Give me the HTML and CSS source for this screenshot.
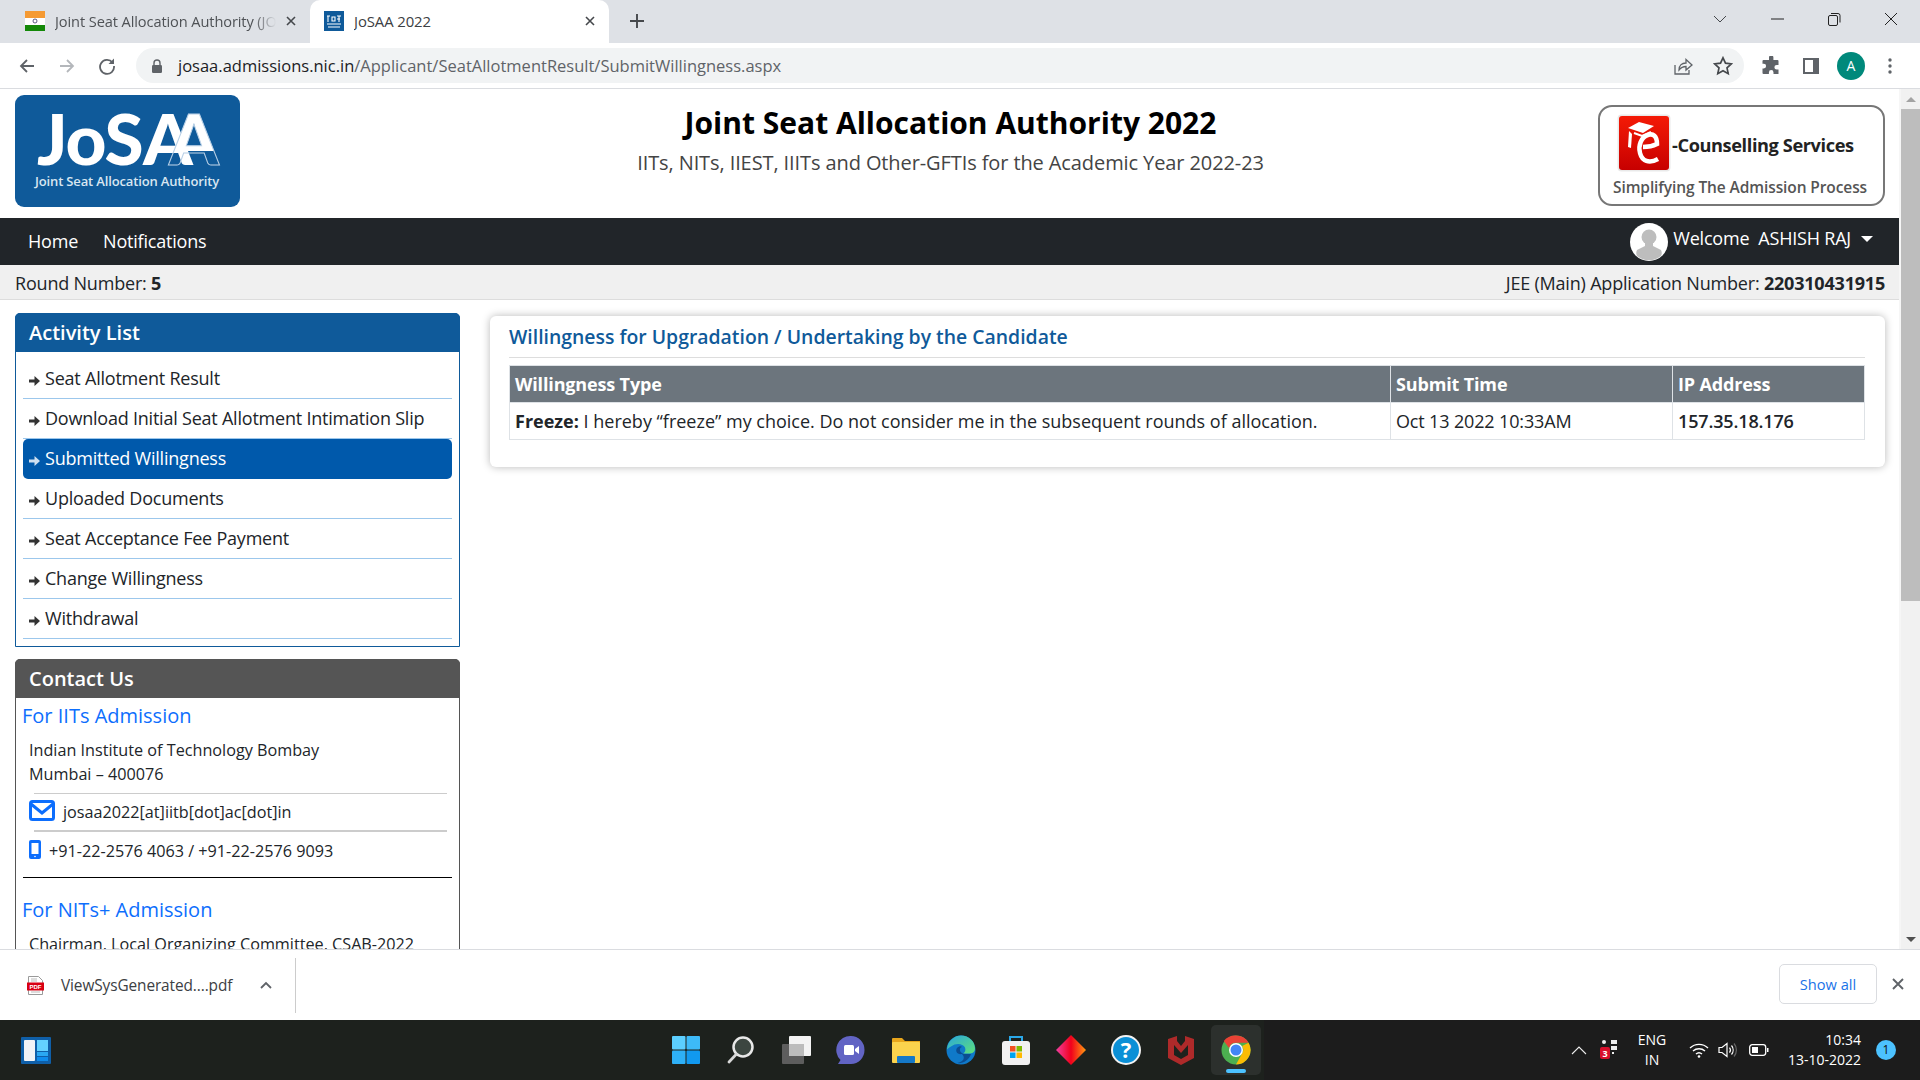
FILE: index.html
```html
<!DOCTYPE html>
<html lang="en">
<head>
  <meta charset="UTF-8">
  <title>JoSAA 2022</title>
  <link rel="stylesheet" href="styles.css">
</head>
<body>

<div class="browser">
  <!-- Tabs -->
  <div class="tabstrip">
    <div class="tab">
      <svg class="favicon" viewBox="0 0 20 20"><rect width="20" height="7" fill="#f59a33"/><rect y="7" width="20" height="7" fill="#fff"/><rect y="14" width="20" height="6" fill="#138808"/><circle cx="10" cy="10" r="2" fill="none" stroke="#336" stroke-width=".8"/></svg>
      <span class="tab-title tab-title-fade">Joint Seat Allocation Authority (JOSAA)</span>
      <svg class="tab-close" viewBox="0 0 10 10"><path d="M1 1l8 8M9 1l-8 8" stroke="#45484c" stroke-width="1.6"/></svg>
    </div>
    <div class="tab tab-active">
      <svg class="favicon" viewBox="0 0 20 20"><rect width="20" height="20" fill="#0f5a9a"/><path d="M3 5h3M4 5v6M8 6h3v4H8zM13 5h4M13 8h3M15 5v6M3 13h14M4 16h12" stroke="#fff" stroke-width="1.1" fill="none"/></svg>
      <span class="tab-title">JoSAA 2022</span>
      <svg class="tab-close" viewBox="0 0 10 10"><path d="M1 1l8 8M9 1l-8 8" stroke="#45484c" stroke-width="1.6"/></svg>
    </div>
    <svg class="new-tab" viewBox="0 0 14 14"><path d="M7 0v14M0 7h14" stroke="#45484c" stroke-width="1.9"/></svg>
    <div class="window-controls">
      <svg viewBox="0 0 16 16"><path d="M2 5l6 6 6-6" fill="none" stroke="#45484c" stroke-width="1"/></svg>
      <svg viewBox="0 0 16 16"><path d="M2 8h13" stroke="#222" stroke-width="1"/></svg>
      <svg viewBox="0 0 16 16"><rect x="2.5" y="4.5" width="9" height="10" rx="1.5" fill="none" stroke="#222"/><path d="M5 2.5h7a2 2 0 0 1 2 2v7" fill="none" stroke="#222"/></svg>
      <svg viewBox="0 0 16 16"><path d="M2 2l12 12M14 2L2 14" stroke="#222" stroke-width="1"/></svg>
    </div>
  </div>

  <!-- Address bar -->
  <div class="toolbar">
    <svg class="tool-icon" viewBox="0 0 18 18"><path d="M16 9H3M9 3L3 9l6 6" fill="none" stroke="#5f6368" stroke-width="1.8"/></svg>
    <svg class="tool-icon" viewBox="0 0 18 18"><path d="M2 9h13M9 3l6 6-6 6" fill="none" stroke="#b4b7bb" stroke-width="1.8"/></svg>
    <svg class="tool-icon" viewBox="0 0 18 18"><path d="M14.5 5.5A7 7 0 1 0 16 9" fill="none" stroke="#5f6368" stroke-width="1.8"/><path d="M16 1.5v5.5h-5.5z" fill="#5f6368"/></svg>
    <div class="omnibox">
      <svg class="lock" viewBox="0 0 12 14"><path d="M3 6V4a3 3 0 0 1 6 0v2" fill="none" stroke="#5f6368" stroke-width="1.4"/><rect x="1" y="6" width="10" height="8" rx="1.2" fill="#5f6368"/></svg>
      <span class="url"><span class="url-host">josaa.admissions.nic.in</span>/Applicant/SeatAllotmentResult/SubmitWillingness.aspx</span>
      <svg class="omni-icon omni-share" viewBox="0 0 20 20"><path d="M2 9v9h14v-4" fill="none" stroke="#5f6368" stroke-width="1.3"/><path d="M6 14c0-5 3-7 7-7V3.5l6 5.5-6 5v-3.500c-3 0-5 1-7 3.500z" fill="none" stroke="#5f6368" stroke-width="1.3"/></svg>
      <svg class="omni-icon" viewBox="0 0 20 20"><path d="M10 1.800l2.500 5.400 5.900.7-4.400 4 1.200 5.800L10 14.800l-5.200 2.900L6 11.900l-4.400-4 5.900-.7z" fill="none" stroke="#45484c" stroke-width="1.700"/></svg>
    </div>
    <svg class="ext-icon" viewBox="0 0 20 20"><path d="M8 1.500a2.200 2.200 0 0 1 4.400 0V4h4.100a1 1 0 0 1 1 1v4h-1.800a2.300 2.300 0 0 0 0 4.600h1.800v4.400h-5v-1.600a2.300 2.300 0 0 0-4.600 0V18H2.500a1 1 0 0 1-1-1v-4.600h1.300a2.300 2.300 0 0 0 0-4.600H1.500V5a1 1 0 0 1 1-1H8z" fill="#5f6368"/></svg>
    <svg class="ext-icon" viewBox="0 0 20 20"><path fill-rule="evenodd" d="M2 2h16v16H2zM4 4v12h8V4z" fill="#5f6368"/></svg>
    <span class="profile">A</span>
    <svg class="kebab" viewBox="0 0 4 18"><circle cx="2" cy="3" r="1.700" fill="#5f6368"/><circle cx="2" cy="9" r="1.700" fill="#5f6368"/><circle cx="2" cy="15" r="1.700" fill="#5f6368"/></svg>
  </div>

  <!-- Page -->
  <div class="viewport">
    <div class="page">
      <div class="site-header">
        <div class="josaa-logo">
          <svg viewBox="0 0 225 112" class="josaa-mark">
            <defs><linearGradient id="halfA" x1="0" y1="0" x2="0" y2="1"><stop offset=".66" stop-color="#fff"/><stop offset=".66" stop-color="#fff" stop-opacity="0"/></linearGradient></defs>
            <text x="22" y="70" class="mark-big">JoS</text>
            <text x="128" y="70" class="mark-big">A</text>
            <text x="154" y="70" class="mark-big mark-outline">A</text>
            <text x="112" y="91" class="mark-small" text-anchor="middle">Joint Seat Allocation Authority</text>
          </svg>
        </div>
        <div class="site-title">
          <h1>Joint Seat Allocation Authority 2022</h1>
          <p>IITs, NITs, IIEST, IIITs and Other-GFTIs for the Academic Year 2022-23</p>
        </div>
        <div class="counselling-logo">
          <div class="counselling-top">
            <svg class="e-mark" viewBox="0 0 54 58">
              <defs><linearGradient id="redg" x1="0" y1="0" x2="0" y2="1"><stop offset="0" stop-color="#f41a06"/><stop offset="1" stop-color="#c70000"/></linearGradient></defs>
              <rect x=".5" y=".5" width="53" height="57" rx="4" fill="#e9e9e9"/>
              <rect x="2" y="2" width="50" height="54" rx="3" fill="url(#redg)"/>
              <path d="M11 14l11-6 15 4-11 7z" fill="#fff"/>
              <path d="M12 17l-1 16 3 1 1-14z" fill="#fff"/>
              <path d="M17 19l8 3 9-4" fill="none" stroke="#fff" stroke-width="2"/>
              <path d="M26 33c6 0 10-1 14-3 0-8-4-11-9-9-7 2-10 11-8 18 2 8 9 11 18 6" fill="none" stroke="#fff" stroke-width="4.500"/>
            </svg>
            <span class="counselling-name">-Counselling Services</span>
          </div>
          <div class="counselling-tag">Simplifying The Admission Process</div>
        </div>
      </div>

      <nav class="navbar">
        <a class="nav-link">Home</a>
        <a class="nav-link">Notifications</a>
        <div class="nav-user">
          <svg class="user-pic" viewBox="0 0 38 38"><circle cx="19" cy="19" r="19" fill="#fff"/><circle cx="19" cy="14" r="7.500" fill="#bdbdbd"/><path d="M15 20h8v3l8 4c1 2 1 4 0 6a19 19 0 0 1-24 0c-1-2-1-4 0-6l8-4z" fill="#bdbdbd"/></svg>
          <span class="user-text">Welcome&nbsp; ASHISH RAJ</span>
          <span class="caret"></span>
        </div>
      </nav>

      <div class="round-bar">
        <span>Round Number: <strong>5</strong></span>
        <span>JEE (Main) Application Number: <strong>220310431915</strong></span>
      </div>

      <div class="content">
        <aside class="sidebar">
          <div class="side-panel activity">
            <div class="side-head">Activity List</div>
            <ul class="activity-list">
              <li><svg class="li-arrow" viewBox="0 0 11 10"><path d="M0 3.500h5.500V0L11 5l-5.500 5V6.500H0z"/></svg>Seat Allotment Result</li>
              <li><svg class="li-arrow" viewBox="0 0 11 10"><path d="M0 3.500h5.500V0L11 5l-5.500 5V6.500H0z"/></svg>Download Initial Seat Allotment Intimation Slip</li>
              <li class="active"><svg class="li-arrow" viewBox="0 0 11 10"><path d="M0 3.500h5.500V0L11 5l-5.500 5V6.500H0z"/></svg>Submitted Willingness</li>
              <li><svg class="li-arrow" viewBox="0 0 11 10"><path d="M0 3.500h5.500V0L11 5l-5.500 5V6.500H0z"/></svg>Uploaded Documents</li>
              <li><svg class="li-arrow" viewBox="0 0 11 10"><path d="M0 3.500h5.500V0L11 5l-5.500 5V6.500H0z"/></svg>Seat Acceptance Fee Payment</li>
              <li><svg class="li-arrow" viewBox="0 0 11 10"><path d="M0 3.500h5.500V0L11 5l-5.500 5V6.500H0z"/></svg>Change Willingness</li>
              <li><svg class="li-arrow" viewBox="0 0 11 10"><path d="M0 3.500h5.500V0L11 5l-5.500 5V6.500H0z"/></svg>Withdrawal</li>
            </ul>
          </div>

          <div class="side-panel contact">
            <div class="side-head">Contact Us</div>
            <div class="contact-body">
              <h4>For IITs Admission</h4>
              <p class="address">Indian Institute of Technology Bombay<br>Mumbai – 400076</p>
              <div class="contact-row email-row">
                <svg class="mail-icon" viewBox="0 0 26 21"><rect x="1.500" y="1.500" width="23" height="18" rx="2" fill="none" stroke="#0d6efd" stroke-width="3"/><path d="M2 4l11 9 11-9" fill="none" stroke="#0d6efd" stroke-width="3"/></svg>
                <span>josaa2022[at]iitb[dot]ac[dot]in</span>
              </div>
              <div class="contact-row phone-row">
                <svg class="phone-icon" viewBox="0 0 12 19"><rect width="12" height="19" rx="2" fill="#0d6efd"/><rect x="2.500" y="3" width="7" height="11" fill="#fff"/><circle cx="6" cy="16.500" r=".8" fill="#fff"/></svg>
                <span>+91-22-2576 4063 / +91-22-2576 9093</span>
              </div>
              <hr class="contact-sep">
              <h4>For NITs+ Admission</h4>
              <p class="address">Chairman, Local Organizing Committee, CSAB-2022</p>
            </div>
          </div>
        </aside>

        <main class="main-panel">
          <h2>Willingness for Upgradation / Undertaking by the Candidate</h2>
          <table class="will-table">
            <tr>
              <th class="col-type">Willingness Type</th>
              <th class="col-time">Submit Time</th>
              <th>IP Address</th>
            </tr>
            <tr>
              <td class="type-cell"><b>Freeze:</b> I hereby “freeze” my choice. Do not consider me in the subsequent rounds of allocation.</td>
              <td>Oct 13 2022 10:33AM</td>
              <td><b class="ip">157.35.18.176</b></td>
            </tr>
          </table>
        </main>
      </div>
    </div>

    <div class="scrollbar">
      <div class="scroll-arrow"><span class="arrow-up"></span></div>
      <div class="scroll-thumb"></div>
      <div class="scroll-track"></div>
      <div class="scroll-arrow"><span class="arrow-down"></span></div>
    </div>
  </div>

  <!-- Downloads -->
  <div class="download-bar">
    <div class="download-item">
      <svg class="pdf-icon" viewBox="0 0 17 19"><path d="M1.500.500h10l4 4v14h-14z" fill="#fff" stroke="#9a9a9a"/><path d="M4 3h6M4 5h6M4 16h9" stroke="#bbb"/><rect y="6.500" width="17" height="8" fill="#d90012"/><text x="8.500" y="13" class="pdf-label" text-anchor="middle">PDF</text></svg>
      <span class="download-name">ViewSysGenerated....pdf</span>
      <svg class="download-chevron" viewBox="0 0 12 8"><path d="M1 7l5-5 5 5" fill="none" stroke="#5f6368" stroke-width="1.800"/></svg>
    </div>
    <button class="show-all">Show all</button>
    <svg class="download-close" viewBox="0 0 12 12"><path d="M1 1l10 10M11 1L1 11" stroke="#5f6368" stroke-width="1.900"/></svg>
  </div>

  <!-- Windows taskbar -->
  <div class="taskbar">
    <div class="task-left">
      <svg viewBox="0 0 30 27" class="widgets"><rect width="30" height="27" rx="1" fill="#0f5fa8"/><rect x="3" y="3" width="11" height="21" rx="1" fill="#f1f3f6"/><rect x="16" y="3" width="11" height="11" fill="#63d1ff"/><rect x="16" y="15" width="11" height="4" fill="#2aa8f2"/><rect x="16" y="20" width="11" height="4" fill="#0f8cec"/></svg>
    </div>
    <div class="task-center">
      <div class="task-app"><svg viewBox="0 0 30 30"><rect x="1" y="1" width="13.500" height="13.500" rx="1" fill="#5ccfff"/><rect x="15.500" y="1" width="13.500" height="13.500" rx="1" fill="#3dbaf8"/><rect x="1" y="15.500" width="13.500" height="13.500" rx="1" fill="#2eb0f7"/><rect x="15.500" y="15.500" width="13.500" height="13.500" rx="1" fill="#1199f0"/></svg></div>
      <div class="task-app"><svg viewBox="0 0 30 30"><circle cx="17" cy="12" r="9.500" fill="#3c4640" stroke="#e8e8e8" stroke-width="2.500"/><path d="M10.500 19L3 27" stroke="#d8d8d8" stroke-width="2.800" stroke-linecap="round"/></svg></div>
      <div class="task-app"><svg viewBox="0 0 30 30"><rect x="8" y="1" width="22" height="20" rx="1" fill="#f3f3f3"/><rect x="1" y="9" width="22" height="20" rx="1" fill="#5d5d5d"/><rect x="8" y="9" width="15" height="12" fill="#bcbcbc"/></svg></div>
      <div class="task-app"><svg viewBox="0 0 30 30"><path d="M15 1a13.500 14 0 0 1 0 28H2l2.500-4A14 14 0 0 1 15 1z" fill="#6264c4"/><rect x="8" y="10" width="10" height="10" rx="1.500" fill="#fff"/><path d="M19 14l4-3v8l-4-3z" fill="#fff"/></svg></div>
      <div class="task-app"><svg viewBox="0 0 30 30"><path d="M1 4a1 1 0 0 1 1-1h9l3 3h15v6H1z" fill="#e8a61c"/><rect x="1" y="7" width="28" height="21" rx="1" fill="#fbd34d"/><rect x="6" y="21" width="18" height="7" rx="1" fill="#1579c8"/></svg></div>
      <div class="task-app"><svg viewBox="0 0 30 30"><defs><linearGradient id="edg" x1="0" y1="0" x2="1" y2="1"><stop offset="0" stop-color="#2aa6dc"/><stop offset="1" stop-color="#5ee07a"/></linearGradient></defs><circle cx="15" cy="15" r="14.500" fill="#0f79c9"/><path d="M1 14C2 5 9 .500 15 .500c8 0 14 6 14 13 0 4-3 5-6 5h-6c2-1 3-3 2-6-2-4-9-5-14-1-2 1-3 2-4 3z" fill="url(#edg)"/><path d="M16 19c-5 1-7-3-5-6 2-2 4-2 5-1-4 1-2 7 3 7h6c-2 6-8 10-14 9 6-1 9-5 5-9z" fill="#0b4d92"/></svg></div>
      <div class="task-app"><svg viewBox="0 0 30 30"><path d="M9 6V2h12v4" fill="none" stroke="#2aa8e8" stroke-width="2"/><rect x="1" y="6" width="28" height="24" rx="3" fill="#f1f1f1"/><rect x="9" y="11" width="5.500" height="5.500" fill="#f25022"/><rect x="15.500" y="11" width="5.500" height="5.500" fill="#7fba00"/><rect x="9" y="17.500" width="5.500" height="5.500" fill="#00a4ef"/><rect x="15.500" y="17.500" width="5.500" height="5.500" fill="#ffb900"/></svg></div>
      <div class="task-app"><svg viewBox="0 0 30 30"><defs><linearGradient id="dmg" x1="0" y1="0" x2="1" y2="0"><stop offset="0" stop-color="#f040a0"/><stop offset=".5" stop-color="#f0001c"/><stop offset="1" stop-color="#ff9a10"/></linearGradient></defs><path d="M15 0l15 15-15 15L0 15z" fill="url(#dmg)"/></svg></div>
      <div class="task-app"><svg viewBox="0 0 30 30"><circle cx="15" cy="15" r="14" fill="#0a8fd6" stroke="#f2f2f2" stroke-width="2"/><text x="15" y="23" class="help-mark" text-anchor="middle">?</text></svg></div>
      <div class="task-app"><svg viewBox="0 0 30 30"><path d="M2 4l9-3v5l4 5 4-5V1l9 3v19l-13 7-13-7z" fill="#ae2a2a"/><path d="M8 10v10l7 4 7-4V10l-7 8z" fill="#1c221d"/></svg></div>
      <div class="task-app task-app-active">
        <svg viewBox="0 0 30 30"><circle cx="15" cy="15" r="14.500" fill="#4caf50"/><path d="M15 .500a14.500 14.500 0 0 1 12.560 7.250H15a7 7 0 0 0-6.800 5.400L2.800 6A14.500 14.500 0 0 1 15 .500z" fill="#e94235"/><path d="M27.560 7.750A14.500 14.500 0 0 1 15 29.500l5.800-10.500a7 7 0 0 0 .3-8z" fill="#fbbc04"/><circle cx="15" cy="15" r="7" fill="#fff"/><circle cx="15" cy="15" r="5.500" fill="#4285f4"/></svg>
        <span class="active-dash"></span>
      </div>
    </div>
    <div class="task-right">
      <svg class="tray-chevron" viewBox="0 0 16 9"><path d="M1 8l7-7 7 7" fill="none" stroke="#eee" stroke-width="1.100"/></svg>
      <svg class="tray-app" viewBox="0 0 18 22"><rect y="8" width="10" height="12" rx="2" fill="#d80f2c"/><text x="5" y="17.500" class="tray-badge" text-anchor="middle">3</text><circle cx="4" cy="3" r="2" fill="#eee"/><rect x="11" y="1" width="6" height="4" fill="#eee"/><rect x="11" y="7" width="6" height="4" fill="#eee"/><rect x="12" y="13" width="2" height="2" fill="#eee"/></svg>
      <div class="tray-lang">ENG<br>IN</div>
      <svg class="tray-wifi" viewBox="0 0 20 16"><path d="M1 6a13 13 0 0 1 18 0M4 9a9 9 0 0 1 12 0M7 12a4.500 4.500 0 0 1 6 0" fill="none" stroke="#fff" stroke-width="1.400"/><circle cx="10" cy="14.500" r="1.300" fill="#fff"/></svg>
      <svg class="tray-sound" viewBox="0 0 20 16"><path d="M1 5.500h3l5-4v13l-5-4H1z" fill="none" stroke="#fff" stroke-width="1.200"/><path d="M11.500 5.500a4 4 0 0 1 0 5M13.500 3.500a7 7 0 0 1 0 9" fill="none" stroke="#fff" stroke-width="1.200"/><path d="M16 1.500a10 10 0 0 1 0 13" fill="none" stroke="#666" stroke-width="1.200"/></svg>
      <svg class="tray-battery" viewBox="0 0 20 12"><rect x=".7" y=".7" width="16" height="10.600" rx="2.500" fill="none" stroke="#fff" stroke-width="1.300"/><rect x="3" y="3" width="6" height="6" fill="#fff"/><rect x="18" y="4" width="1.500" height="4" fill="#fff"/></svg>
      <div class="tray-clock">10:34<br>13-10-2022</div>
      <span class="notify-badge">1</span>
    </div>
  </div>
</div>

</body>
</html>
```

FILE: styles.css
```css
* {
  box-sizing: border-box;
}
body {
  margin: 0;
  font-family: "Open Sans", Arial, sans-serif;
  color: #212529;
  background-color: #fff;
}
.browser {
  height: 100vh;
  display: flex;
  flex-direction: column;
  overflow: hidden;
}

/* TABS */
.tabstrip {
  height: 43px;
  flex: none;
  display: flex;
  align-items: flex-end;
  background-color: #dee1e6;
}
.tab {
  width: 310px;
  height: 43px;
  padding: 0 14px 2px 25px;
  display: flex;
  align-items: center;
  font-size: 14.6px;
  color: #4f5256;
}
.tab-active {
  width: 299px;
  padding-left: 14px;
  background-color: #fff;
  border-radius: 10px 10px 0 0;
  font-size: 14.9px;
  color: #3c4043;
}
.favicon {
  width: 20px;
  height: 20px;
  flex: none;
  margin-right: 10px;
}
.tab-title {
  flex: 1;
  overflow: hidden;
  white-space: nowrap;
  letter-spacing: -0.1px;
}
.tab-title-fade {
  -webkit-mask-image: linear-gradient(to right, #000 90%, transparent 100%);
  mask-image: linear-gradient(to right, #000 90%, transparent 100%);
}
.tab-close {
  width: 10px;
  height: 10px;
  flex: none;
  margin-left: 10px;
}
.new-tab {
  width: 14px;
  height: 14px;
  margin: 0 0 15px 21px;
}
.window-controls {
  margin-left: auto;
  height: 43px;
  padding-right: 21px;
  display: flex;
  align-items: center;
  gap: 41px;
}
.window-controls svg {
  width: 16px;
  height: 16px;
  margin-bottom: 5px;
}

/* ADDRESS BAR */
.toolbar {
  height: 46px;
  flex: none;
  display: flex;
  align-items: center;
  padding-left: 18px;
  border-bottom: 1px solid #dadce0;
}
.tool-icon {
  width: 18px;
  height: 18px;
  margin-right: 22px;
}
.omnibox {
  width: 1608px;
  height: 35px;
  margin-left: -2px;
  padding: 0 11px 0 15px;
  display: flex;
  align-items: center;
  background-color: #f1f3f4;
  border-radius: 18px;
}
.lock {
  width: 12px;
  height: 14px;
  margin-right: 15px;
}
.url {
  font-size: 16.5px;
  color: #5f6368;
}
.url-host {
  color: #202124;
}
.omni-icon {
  width: 20px;
  height: 20px;
  margin-left: 20px;
}
.omni-share {
  margin-left: auto;
}
.ext-icon {
  width: 20px;
  height: 20px;
  margin-left: 20px;
}
.omnibox + .ext-icon {
  margin-left: 17px;
}
.profile {
  width: 28px;
  height: 28px;
  margin-left: 16px;
  border-radius: 50%;
  background-color: #00897b;
  color: #fff;
  font-size: 14px;
  line-height: 28px;
  text-align: center;
}
.kebab {
  width: 4px;
  height: 18px;
  margin-left: 23px;
}

/* PAGE */
.viewport {
  flex: 1;
  min-height: 0;
  display: flex;
}
.page {
  flex: 1;
  min-width: 0;
  overflow: hidden;
}
.site-header {
  height: 129px;
  padding: 6px 14px 0 15px;
  display: flex;
  align-items: flex-start;
}
.josaa-logo {
  width: 225px;
  height: 112px;
  flex: none;
  background-color: #0f5a9a;
  border-radius: 9px;
}
.josaa-mark {
  display: block;
  width: 225px;
  height: 112px;
}
.mark-big {
  font-family: Lato, "Open Sans", sans-serif;
  font-size: 71px;
  font-weight: 900;
  fill: #fff;
  letter-spacing: -1px;
}
.mark-outline {
  fill: url(#halfA);
  stroke: #b9d0e6;
  stroke-width: 1;
}
.mark-small {
  font-size: 13px;
  font-weight: 600;
  fill: #d9e6f1;
  letter-spacing: -0.15px;
}
.site-title {
  flex: 1;
  text-align: center;
  padding-top: 8px;
  padding-left: 63px;
}
.site-title h1 {
  margin: 0;
  font-size: 30px;
  line-height: 40px;
  font-weight: 700;
  color: #000;
}
.site-title p {
  margin: 1px 0 0;
  font-size: 20px;
  line-height: 38px;
  letter-spacing: -0.1px;
  color: #444;
}
.counselling-logo {
  width: 287px;
  height: 101px;
  flex: none;
  margin-top: 10px;
  padding: 7px 0 0 17px;
  border: 2px solid #777;
  border-radius: 14px;
}
.counselling-top {
  height: 58px;
  display: flex;
  align-items: center;
}
.e-mark {
  width: 54px;
  height: 58px;
  flex: none;
}
.counselling-name {
  margin: 3px 0 0 1px;
  font-size: 18.2px;
  font-weight: 700;
  letter-spacing: -0.4px;
  color: #222;
}
.counselling-tag {
  margin: 4px 0 0 -4px;
  font-size: 15.5px;
  font-weight: 600;
  color: #555;
  white-space: nowrap;
  letter-spacing: -0.1px;
}

.navbar {
  height: 47px;
  padding: 0 26px 2px 28px;
  display: flex;
  align-items: center;
  background-color: #212529;
  color: #fff;
  font-size: 18px;
}
.nav-link {
  margin-right: 25px;
  letter-spacing: -0.2px;
}
.nav-user {
  margin: 2px 0 0 auto;
  display: flex;
  align-items: center;
}
.user-pic {
  width: 38px;
  height: 38px;
  margin-right: 5px;
}
.user-text {
  margin-top: -7px;
  letter-spacing: -0.2px;
}
.caret {
  width: 0;
  height: 0;
  margin: -5px 0 0 10px;
  border-top: 6px solid #fff;
  border-left: 6px solid transparent;
  border-right: 6px solid transparent;
}

.round-bar {
  height: 35px;
  padding: 1px 14px 0 15px;
  display: flex;
  align-items: center;
  justify-content: space-between;
  background-color: #f0f0f0;
  border-bottom: 1px solid #ddd;
  font-size: 18px;
  letter-spacing: -0.2px;
}
.round-bar strong {
  font-weight: 700;
}

.content {
  padding: 0 14px 0 15px;
  display: flex;
  align-items: flex-start;
  gap: 30px;
}
.sidebar {
  width: 445px;
  flex: none;
  padding-top: 13px;
}
.side-panel {
  border: 1px solid #0f5a9a;
  border-radius: 5px 5px 0 0;
}
.side-head {
  height: 39px;
  margin: -1px -1px 0;
  padding-left: 14px;
  background-color: #0f5a9a;
  border-radius: 5px 5px 0 0;
  color: #fff;
  font-size: 20px;
  font-weight: 600;
  line-height: 39px;
}
.activity-list {
  margin: 0;
  padding: 7px;
  list-style: none;
}
.activity-list li {
  height: 40px;
  padding-left: 6px;
  border-bottom: 1px solid #9cc7ec;
  font-size: 18px;
  line-height: 38px;
  letter-spacing: -0.22px;
  color: #212529;
}
.li-arrow {
  width: 11px;
  height: 10px;
  margin: 0 5px -1px 0;
  fill: #333;
}
.activity-list li.active {
  background-color: #0059ab;
  border-bottom: none;
  border-radius: 5px;
  color: #fff;
}
.active .li-arrow {
  fill: #cfe0f0;
}

.contact {
  margin-top: 12px;
  border-color: #555;
  height: 400px;
}
.contact .side-head {
  background-color: #555;
}
.contact-body {
  padding: 1px 7px 2px 6px;
}
.contact-body h4 {
  margin: 0;
  font-size: 20px;
  line-height: 34px;
  font-weight: 400;
  color: #0d6efd;
}
.address {
  margin: 5px 0 0 7px;
  font-size: 16.2px;
  line-height: 24px;
}
.contact-row {
  margin-left: 7px;
  display: flex;
  align-items: center;
  font-size: 16.2px;
}
.email-row {
  height: 39px;
  margin-top: 7px;
  padding-bottom: 1px;
  position: relative;
  gap: 8px;
}
.email-row::before,
.email-row::after {
  content: "";
  position: absolute;
  left: 5px;
  right: 5px;
  background-color: #ccc;
}
.email-row::before {
  top: 0;
  height: 1px;
}
.email-row::after {
  bottom: 0;
  height: 2px;
}
.mail-icon {
  width: 26px;
  height: 21px;
  margin-top: -3px;
}
.phone-row {
  height: 38px;
  gap: 8px;
}
.phone-icon {
  width: 12px;
  height: 19px;
  margin-top: -3px;
}
.contact-sep {
  margin: 7px 0 15px 1px;
  border: 0;
  border-top: 1px solid #000;
}

.main-panel {
  width: 1395px;
  height: 151px;
  margin-top: 16px;
  padding: 0 20px 0 19px;
  background-color: #fff;
  border-radius: 6px;
  box-shadow: 0 0 8px rgba(0,0,0,0.28);
}
.main-panel h2 {
  margin: 0 0 7px 0;
  height: 42px;
  border-bottom: 1px solid #ddd;
  font-size: 19.4px;
  line-height: 41px;
  font-weight: 600;
  color: #0f5a9a;
}
.will-table {
  width: 100%;
  border-collapse: collapse;
  table-layout: fixed;
  font-size: 18px;
  letter-spacing: -0.15px;
}
.will-table th,
.will-table td {
  height: 37px;
  padding: 0 5px;
  border: 1px solid #dee2e6;
  text-align: left;
}
.will-table th {
  background-color: #6c757d;
  color: #fff;
  font-weight: 700;
}
.will-table .type-cell {
  letter-spacing: 0;
}
.ip {
  font-weight: 600;
}
.col-type {
  width: 881px;
}
.col-time {
  width: 282px;
}

/* SCROLLBAR */
.scrollbar {
  width: 21px;
  flex: none;
  display: flex;
  flex-direction: column;
  background-color: #f1f1f1;
  border-left: 2px solid #f6f6f6;
}
.scroll-arrow {
  height: 20px;
  flex: none;
  display: flex;
  align-items: center;
  justify-content: center;
}
.arrow-up,
.arrow-down {
  width: 0;
  height: 0;
  border-left: 5px solid transparent;
  border-right: 5px solid transparent;
}
.arrow-up {
  border-bottom: 5px solid #a3a3a3;
}
.arrow-down {
  border-top: 5px solid #505050;
}
.scroll-thumb {
  height: 492px;
  flex: none;
  background-color: #bdbdbd;
}
.scroll-track {
  flex: 1;
}

/* DOWNLOADS */
.download-bar {
  height: 71px;
  flex: none;
  padding-right: 16px;
  display: flex;
  align-items: center;
  border-top: 1px solid #dadce0;
  background-color: #fff;
}
.download-item {
  width: 296px;
  height: 55px;
  padding-left: 27px;
  display: flex;
  align-items: center;
  border-right: 1px solid #ccc;
}
.pdf-icon {
  width: 17px;
  height: 19px;
}
.pdf-label {
  font-family: "Liberation Sans", Arial, sans-serif;
  font-size: 6px;
  font-weight: 700;
  fill: #fff;
}
.download-name {
  margin-left: 17px;
  font-size: 15.4px;
  color: #3c4043;
  letter-spacing: -0.1px;
}
.download-chevron {
  width: 12px;
  height: 8px;
  margin-left: 28px;
}
.show-all {
  width: 98px;
  height: 40px;
  margin: 0 0 2px auto;
  background-color: #fff;
  border: 1px solid #dadce0;
  border-radius: 5px;
  color: #1a73e8;
  font-family: "Open Sans", Arial, sans-serif;
  font-size: 14.6px;
  font-weight: 500;
}
.download-close {
  width: 12px;
  height: 12px;
  margin: 0 0 2px 15px;
}

/* TASKBAR */
.taskbar {
  height: 60px;
  flex: none;
  display: grid;
  grid-template-columns: 1fr auto 1fr;
  align-items: center;
  background-color: #1d211d;
  color: #fff;
}
.task-left {
  padding-left: 21px;
}
.widgets {
  display: block;
  width: 30px;
  height: 27px;
}
.task-center {
  display: flex;
  margin-left: 2px;
}
.task-app {
  width: 55px;
  height: 50px;
  display: flex;
  align-items: center;
  justify-content: center;
  position: relative;
}
.task-app svg {
  width: 30px;
  height: 30px;
}
.task-app-active {
  width: 50px;
  margin: 0 2.5px;
  background-color: #2c302d;
  border-radius: 5px;
}
.active-dash {
  position: absolute;
  left: 15px;
  right: 15px;
  bottom: 2px;
  height: 4px;
  border-radius: 2px;
  background-color: #4cc2ff;
}
.help-mark {
  font-size: 22px;
  font-weight: 700;
  fill: #fff;
}
.task-right {
  display: flex;
  align-items: center;
  justify-content: flex-end;
  padding-right: 24px;
  background-color: #1c1c1c;
  height: 60px;
}
.tray-chevron {
  width: 16px;
  height: 9px;
}
.tray-app {
  width: 18px;
  height: 22px;
  margin-left: 13px;
}
.tray-badge {
  font-size: 9px;
  font-weight: 700;
  fill: #fff;
}
.tray-lang {
  width: 50px;
  margin-left: 9px;
  font-size: 14px;
  line-height: 20px;
  text-align: center;
}
.tray-wifi {
  width: 20px;
  height: 16px;
  margin-left: 12px;
}
.tray-sound {
  width: 20px;
  height: 16px;
  margin-left: 9px;
}
.tray-battery {
  width: 20px;
  height: 12px;
  margin-left: 11px;
}
.tray-clock {
  width: 92px;
  font-size: 14px;
  line-height: 20px;
  text-align: right;
}
.notify-badge {
  width: 20px;
  height: 20px;
  margin-left: 15px;
  border-radius: 50%;
  background-color: #4cc2ff;
  color: #111;
  font-size: 12px;
  line-height: 20px;
  text-align: center;
}
```
